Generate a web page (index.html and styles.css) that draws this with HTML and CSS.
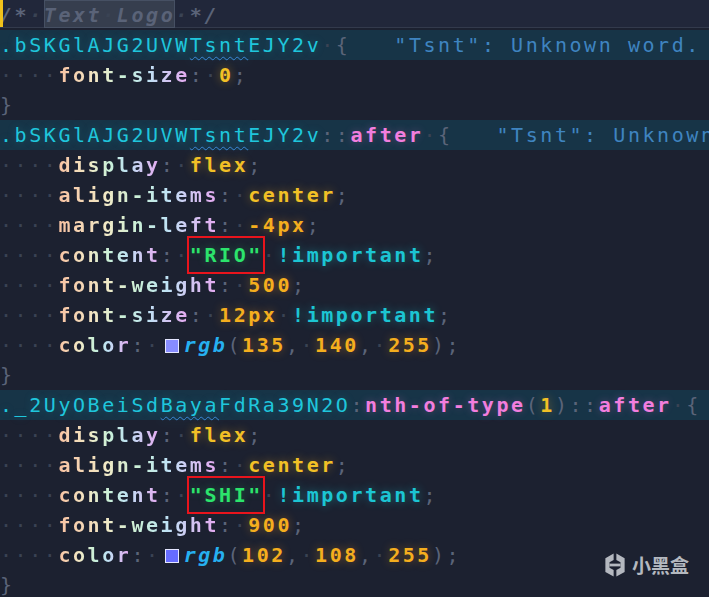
FILE: index.html
```html
<!DOCTYPE html>
<html>
<head>
<meta charset="utf-8">
<link rel="stylesheet" href="styles.css">
</head>
<body>
<div class="editor">
  <div class="line cur"><span class="caret"></span><span class="cm">/*<span class="ws">·</span><span class="sel-text">Text<span class="ws">·</span>Logo</span><span class="ws">·</span>*/</span></div>
  <div class="line hl"><span class="cls">.bSKGlAJG2UVW<span class="typo">Tsnt</span>EJY2v</span><span class="ws">·</span><span class="pn">{</span>   <span class="diag">"Tsnt": Unknown word.</span></div>
  <div class="line"><span class="ws">····</span><span class="prop">font-size</span><span class="pn">:</span><span class="ws">·</span><span class="kw">0</span><span class="pn">;</span></div>
  <div class="line"><span class="pn">}</span></div>
  <div class="line hl"><span class="cls">.bSKGlAJG2UVW<span class="typo">Tsnt</span>EJY2v</span><span class="pn">::</span><span class="pse">after</span><span class="ws">·</span><span class="pn">{</span>   <span class="diag">"Tsnt": Unknown</span></div>
  <div class="line"><span class="ws">····</span><span class="prop">display</span><span class="pn">:</span><span class="ws">·</span><span class="kw">flex</span><span class="pn">;</span></div>
  <div class="line"><span class="ws">····</span><span class="prop">align-items</span><span class="pn">:</span><span class="ws">·</span><span class="kw">center</span><span class="pn">;</span></div>
  <div class="line"><span class="ws">····</span><span class="prop">margin-left</span><span class="pn">:</span><span class="ws">·</span><span class="num">-4px</span><span class="pn">;</span></div>
  <div class="line"><span class="ws">····</span><span class="prop">content</span><span class="pn">:</span><span class="ws">·</span><span class="str boxed">"RIO"</span><span class="ws">·</span><span class="imp">!important</span><span class="pn">;</span></div>
  <div class="line"><span class="ws">····</span><span class="prop">font-weight</span><span class="pn">:</span><span class="ws">·</span><span class="num">500</span><span class="pn">;</span></div>
  <div class="line"><span class="ws">····</span><span class="prop">font-size</span><span class="pn">:</span><span class="ws">·</span><span class="num">12px</span><span class="ws">·</span><span class="imp">!important</span><span class="pn">;</span></div>
  <div class="line"><span class="ws">····</span><span class="prop">color</span><span class="pn">:</span><span class="ws">·</span><span class="swatch swatch-a"></span><span class="fn">rgb</span><span class="pn">(</span><span class="num">135</span><span class="pn">,</span><span class="ws">·</span><span class="num">140</span><span class="pn">,</span><span class="ws">·</span><span class="num">255</span><span class="pn">);</span></div>
  <div class="line"><span class="pn">}</span></div>
  <div class="line hl"><span class="cls">._2UyOBeiSd<span class="typo">Baya</span>FdRa39N2O</span><span class="pn">:</span><span class="pse">nth-of-type</span><span class="pn">(</span><span class="kw">1</span><span class="pn">)::</span><span class="pse">after</span><span class="ws">·</span><span class="pn">{</span></div>
  <div class="line"><span class="ws">····</span><span class="prop">display</span><span class="pn">:</span><span class="ws">·</span><span class="kw">flex</span><span class="pn">;</span></div>
  <div class="line"><span class="ws">····</span><span class="prop">align-items</span><span class="pn">:</span><span class="ws">·</span><span class="kw">center</span><span class="pn">;</span></div>
  <div class="line"><span class="ws">····</span><span class="prop">content</span><span class="pn">:</span><span class="ws">·</span><span class="str boxed">"SHI"</span><span class="ws">·</span><span class="imp">!important</span><span class="pn">;</span></div>
  <div class="line"><span class="ws">····</span><span class="prop">font-weight</span><span class="pn">:</span><span class="ws">·</span><span class="num">900</span><span class="pn">;</span></div>
  <div class="line"><span class="ws">····</span><span class="prop">color</span><span class="pn">:</span><span class="ws">·</span><span class="swatch swatch-b"></span><span class="fn">rgb</span><span class="pn">(</span><span class="num">102</span><span class="pn">,</span><span class="ws">·</span><span class="num">108</span><span class="pn">,</span><span class="ws">·</span><span class="num">255</span><span class="pn">);</span></div>
  <div class="line"><span class="pn">}</span></div>
</div>
<div class="watermark">
  <svg class="wm-logo" viewBox="0 0 24 26" width="22" height="24">
    <path d="M10.5 0.5 L1.5 5.5 V20.5 L10.5 25.5 V18.5 L6 16 V10 L10.5 7.5 Z" fill="#b4b8bf"/>
    <path d="M13.5 0.5 L22.5 5.5 V20.5 L13.5 25.5 V18.5 L18 16 V10 L13.5 7.5 Z" fill="#b4b8bf"/>
    <path d="M6 11.5 H18 V14.5 H6 Z" fill="#b4b8bf"/>
  </svg>
  <span class="wm-text">小黑盒</span>
</div>
</body>
</html>
```

FILE: styles.css
```css
html, body {
  margin: 0;
  padding: 0;
  background: #1c2130;
  overflow: hidden;
}

.editor {
  width: 709px;
  height: 597px;
  overflow: hidden;
  font-family: "DejaVu Sans Mono", "Liberation Mono", monospace;
  font-size: 20px;
  letter-spacing: 2.56px;
  color: #cfd6e0;
}

.line {
  height: 30px;
  line-height: 30px;
  white-space: pre;
  position: relative;
}

.line.hl {
  background: #173447;
}

.line.cur {
  background: #21273a;
  box-shadow: inset 0 -2px 0 #1c2130, inset 0 -3px 0 #333a4c;
}

.caret {
  position: absolute;
  left: 0;
  top: 0;
  width: 3px;
  height: 27px;
  background: #f1c21b;
}

.cm {
  color: #5a6378;
  font-style: italic;
  font-weight: bold;
}

.sel-text {
  display: inline-block;
  height: 28px;
  line-height: 30px;
  background: #363e4e;
  box-shadow: inset 0 0 0 1px #465063;
  vertical-align: top;
}

.ws {
  color: #3a4354;
}

.pn {
  color: #5b6479;
}

.cls {
  color: #1fc6dc;
  text-shadow: 0 0 8px rgba(31, 198, 220, 0.25);
}

.typo {
  text-decoration: underline wavy #3a86d6;
  text-decoration-thickness: 1px;
  text-underline-offset: 4px;
}

.pse {
  color: #f27ede;
  font-weight: bold;
  text-shadow: 0 0 8px rgba(242, 126, 222, 0.3);
}

.diag {
  color: #3f84c0;
}

.prop {
  background: linear-gradient(90deg, #f8c2a2 0%, #f1e9c6 30%, #c9f0d8 50%, #bfe2f4 68%, #e6a6f0 100%);
  -webkit-background-clip: text;
  background-clip: text;
  color: transparent;
  font-weight: bold;
}

.kw {
  color: #f2c026;
  font-weight: bold;
  text-shadow: 0 0 10px rgba(242, 170, 30, 0.45);
}

.num {
  color: #f5ae1e;
  font-weight: bold;
  text-shadow: 0 0 10px rgba(245, 150, 30, 0.45);
}

.imp {
  color: #1cc5d3;
  font-weight: bold;
  text-shadow: 0 0 10px rgba(28, 197, 211, 0.45);
}

.str {
  color: #2ce46c;
  font-weight: bold;
  text-shadow: 0 0 8px rgba(44, 228, 108, 0.3);
}

.boxed {
  display: inline-block;
  position: relative;
  height: 30px;
  vertical-align: top;
}

.boxed::after {
  content: "";
  position: absolute;
  left: -3px;
  right: -2px;
  top: -4px;
  bottom: -4px;
  border: 2px solid #e8141c;
  z-index: 2;
}

.fn {
  color: #26b0f0;
  font-style: italic;
  font-weight: bold;
}

.swatch {
  display: inline-block;
  width: 12px;
  height: 12px;
  border: 1px solid #e4e6ff;
  margin: 0 5px 0 4px;
  vertical-align: -1px;
}

.swatch-a {
  background: rgb(135, 140, 255);
}

.swatch-b {
  background: rgb(102, 108, 255);
}

.watermark {
  position: absolute;
  right: 20px;
  bottom: 19px;
  display: flex;
  align-items: center;
  gap: 6px;
}

.wm-text {
  font-family: "Noto Sans CJK SC", sans-serif;
  font-size: 19px;
  font-weight: bold;
  color: #b4b8bf;
  letter-spacing: 0;
}
```
